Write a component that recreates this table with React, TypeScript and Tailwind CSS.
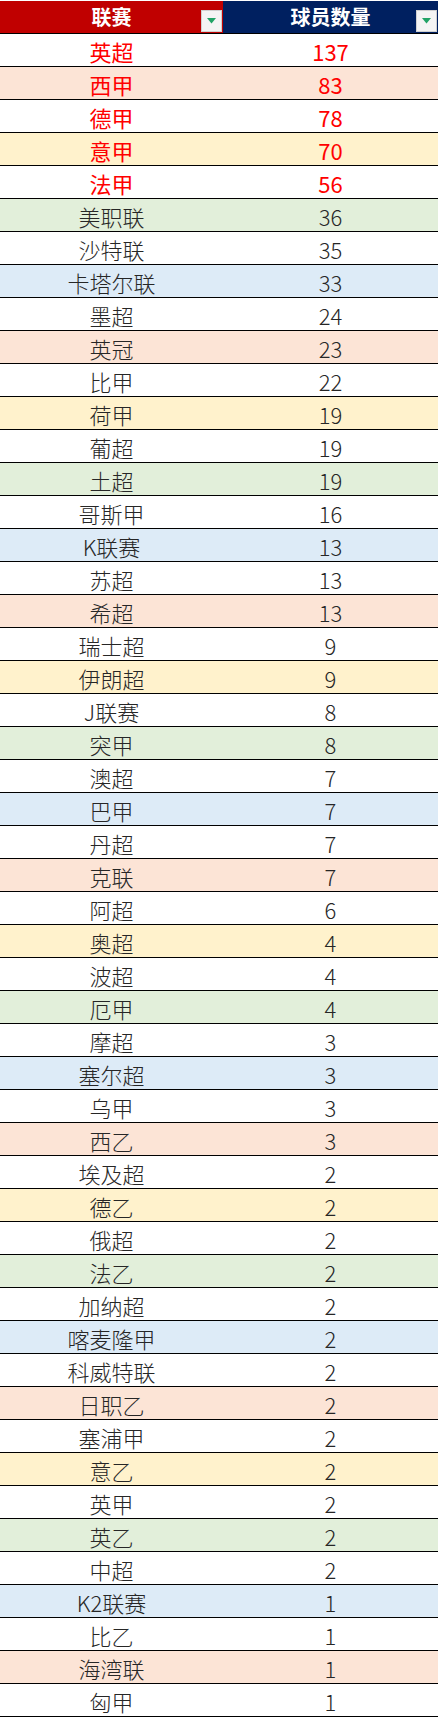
import React from "react";

type Row = { name: string; count: number; red?: boolean };

const rows: Row[] = [
  { name: "英超", count: 137, red: true },
  { name: "西甲", count: 83, red: true },
  { name: "德甲", count: 78, red: true },
  { name: "意甲", count: 70, red: true },
  { name: "法甲", count: 56, red: true },
  { name: "美职联", count: 36 },
  { name: "沙特联", count: 35 },
  { name: "卡塔尔联", count: 33 },
  { name: "墨超", count: 24 },
  { name: "英冠", count: 23 },
  { name: "比甲", count: 22 },
  { name: "荷甲", count: 19 },
  { name: "葡超", count: 19 },
  { name: "土超", count: 19 },
  { name: "哥斯甲", count: 16 },
  { name: "K联赛", count: 13 },
  { name: "苏超", count: 13 },
  { name: "希超", count: 13 },
  { name: "瑞士超", count: 9 },
  { name: "伊朗超", count: 9 },
  { name: "J联赛", count: 8 },
  { name: "突甲", count: 8 },
  { name: "澳超", count: 7 },
  { name: "巴甲", count: 7 },
  { name: "丹超", count: 7 },
  { name: "克联", count: 7 },
  { name: "阿超", count: 6 },
  { name: "奥超", count: 4 },
  { name: "波超", count: 4 },
  { name: "厄甲", count: 4 },
  { name: "摩超", count: 3 },
  { name: "塞尔超", count: 3 },
  { name: "乌甲", count: 3 },
  { name: "西乙", count: 3 },
  { name: "埃及超", count: 2 },
  { name: "德乙", count: 2 },
  { name: "俄超", count: 2 },
  { name: "法乙", count: 2 },
  { name: "加纳超", count: 2 },
  { name: "喀麦隆甲", count: 2 },
  { name: "科威特联", count: 2 },
  { name: "日职乙", count: 2 },
  { name: "塞浦甲", count: 2 },
  { name: "意乙", count: 2 },
  { name: "英甲", count: 2 },
  { name: "英乙", count: 2 },
  { name: "中超", count: 2 },
  { name: "K2联赛", count: 1 },
  { name: "比乙", count: 1 },
  { name: "海湾联", count: 1 },
  { name: "匈甲", count: 1 },
];

const bgCycle = [
  "bg-white",
  "bg-[#fce4d6]",
  "bg-white",
  "bg-[#fff2cc]",
  "bg-white",
  "bg-[#e2efda]",
  "bg-white",
  "bg-[#ddebf7]",
];

function FilterButton() {
  return (
    <div className="absolute right-px bottom-px w-[21px] h-[22px] bg-[#f4f4f4] border border-[#d0d0d0] flex items-center justify-center">
      <svg width="9" height="6" viewBox="0 0 9 6">
        <polygon points="0,0 9,0 4.5,5.5" fill="#21a366" />
      </svg>
    </div>
  );
}

export default function App() {
  return (
    <div
      className="w-[438px] bg-white"
      style={{ fontFamily: '"Noto Sans CJK SC", "Microsoft YaHei", sans-serif' }}
    >
      <div className="flex h-[33px] pt-px bg-white">
        <div className="relative w-[223px] bg-[#c00000] flex items-center justify-center text-white font-bold text-[20px] leading-none">
          联赛
          <FilterButton />
        </div>
        <div className="relative flex-1 bg-[#002060] flex items-center justify-center text-white font-bold text-[20px] leading-none">
          球员数量
          <FilterButton />
        </div>
      </div>
      {rows.map((r, i) => (
        <div
          key={r.name}
          className={`flex h-[33px] border-t border-black ${bgCycle[i % 8]} ${
            i === rows.length - 1 ? "h-[34px] border-b" : ""
          } ${r.red ? "text-[#ff0000] font-normal" : "text-[#262626] font-light"} text-[22px] leading-none`}
        >
          <div className="w-[223px] flex items-center justify-center pt-[2px]">{r.name}</div>
          <div className="flex-1 flex items-center justify-center pt-[2px]">{r.count}</div>
        </div>
      ))}
    </div>
  );
}
